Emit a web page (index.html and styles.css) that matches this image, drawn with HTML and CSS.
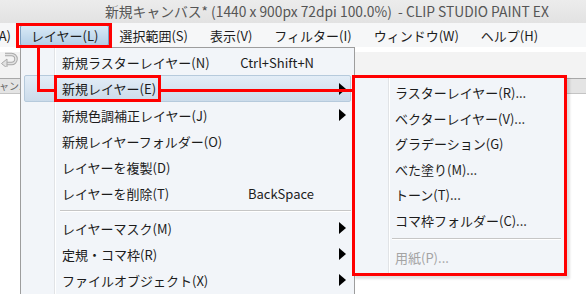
FILE: index.html
```html
<!DOCTYPE html>
<html lang="ja">
<head>
  <meta charset="UTF-8" />
  <title>CLIP STUDIO PAINT EX</title>
  <link rel="stylesheet" href="styles.css">
</head>
<body>

  <div class="window">
    <div class="titlebar">新規キャンバス* (1440 x 900px 72dpi 100.0%)&nbsp; - CLIP STUDIO PAINT EX</div>

    <nav class="menubar">
      <span class="menu-item cut"><span>A)</span></span>
      <span class="menu-item open">レイヤー(L)</span>
      <span class="menu-item">選択範囲(S)</span>
      <span class="menu-item">表示(V)</span>
      <span class="menu-item">フィルター(I)</span>
      <span class="menu-item">ウィンドウ(W)</span>
      <span class="menu-item">ヘルプ(H)</span>
    </nav>

    <div class="workspace">
      <div class="toolbar">
        <svg class="undo" width="18" height="15" viewBox="0 0 18 15">
          <path d="M5 2.5 H11.5 a4.5 4.5 0 0 1 0 9 H6" fill="none" stroke="#a9a9a9" stroke-width="3.6"/>
          <path d="M5 2.5 H11.5 a4.5 4.5 0 0 1 0 9 H6" fill="none" stroke="#e2e2e2" stroke-width="1.6"/>
          <path d="M7 7 L1.5 11.5 L7 16 Z" fill="#e2e2e2" stroke="#a9a9a9" stroke-width="1"/>
        </svg>
      </div>
      <div class="tabs"><span class="tab">キャンバス</span></div>
      <div class="canvas-area"></div>
    </div>

    <!-- Layer menu -->
    <div class="dropdown">
      <div class="item"><span class="label">新規ラスターレイヤー(N)</span><span class="key">Ctrl+Shift+N</span></div>
      <div class="item active"><span class="label">新規レイヤー(E)</span><span class="arrow"></span></div>
      <div class="item"><span class="label">新規色調補正レイヤー(J)</span><span class="arrow"></span></div>
      <div class="item"><span class="label">新規レイヤーフォルダー(O)</span></div>
      <div class="item"><span class="label">レイヤーを複製(D)</span></div>
      <div class="item"><span class="label">レイヤーを削除(T)</span><span class="key">BackSpace</span></div>
      <div class="sep"></div>
      <div class="item"><span class="label">レイヤーマスク(M)</span><span class="arrow"></span></div>
      <div class="item"><span class="label">定規・コマ枠(R)</span><span class="arrow"></span></div>
      <div class="item"><span class="label">ファイルオブジェクト(X)</span><span class="arrow"></span></div>
    </div>

    <!-- New layer submenu -->
    <div class="submenu">
      <div class="sub-item">ラスターレイヤー(R)...</div>
      <div class="sub-item">ベクターレイヤー(V)...</div>
      <div class="sub-item">グラデーション(G)</div>
      <div class="sub-item">べた塗り(M)...</div>
      <div class="sub-item">トーン(T)...</div>
      <div class="sub-item">コマ枠フォルダー(C)...</div>
      <div class="sub-sep"></div>
      <div class="sub-item disabled">用紙(P)...</div>
    </div>

    <!-- red annotation -->
    <div class="mark mark-menu"></div>
    <div class="mark mark-item"></div>
    <div class="line line-down"></div>
    <div class="line line-in"></div>
    <div class="line line-out"></div>
  </div>

</body>
</html>
```

FILE: styles.css
```css
body {
  margin: 0;
  font-family: "Noto Sans CJK JP", sans-serif;
  font-size: 13px;
  color: #1c1c1c;
  background: #fff;
}
.window {
  position: relative;
  width: 586px;
  height: 294px;
  overflow: hidden;
}
.titlebar {
  height: 23px;
  line-height: 23px;
  padding-left: 105px;
  font-size: 13.8px;
  color: #555;
  white-space: nowrap;
  background: linear-gradient(#ececec, #e2e2e2);
}

.menubar {
  display: flex;
  align-items: center;
  height: 24px;
  background: #f6f7f8;
  white-space: nowrap;
}
.menu-item {
  height: 19px;
  line-height: 19px;
  padding: 0 11px;
  border: 1px solid transparent;
  margin-right: -2px;
}
.menu-item.cut {
  display: flex;
  justify-content: flex-end;
  width: 10px;
  padding: 0 10px 0 0;
}
.menu-item.open {
  padding: 0 10px;
  border-color: #7d9dbe;
  border-radius: 2px;
  background: linear-gradient(#d9e9f6, #b3cfe7);
}

.workspace {
  height: 247px;
}
.toolbar {
  height: 26px;
  background: #f3f3f3;
  border-bottom: 1px solid #a8a8a8;
}
.undo {
  display: block;
  margin: 5px 0 0 0;
}
.tabs {
  height: 14px;
  background: #e4e4e4;
  border-bottom: 1px solid #c4c4c4;
  overflow: hidden;
}
.tab {
  display: block;
  margin-left: -11px;
  font-size: 10px;
  line-height: 14px;
  color: #666;
}
.canvas-area {
  height: 100%;
  background: #fff;
}

/* Menus */
.dropdown {
  position: absolute;
  left: 20px;
  top: 47px;
  width: 333px;
  height: 260px;
  padding-top: 1px;
  border: 1px solid #9d9d9d;
  background: linear-gradient(to right, transparent 33px, #e1e3e6 33px, #e1e3e6 34px, #fff 34px, #fff 35px, transparent 35px), #f2f5f9;
}
.item {
  display: flex;
  align-items: center;
  height: 26px;
  padding: 0 8px 0 41px;
  white-space: nowrap;
}
.item .label {
  flex: 1;
}
.item .key {
  margin-right: 32px;
}
.item.active {
  height: 25px;
  margin: 0 3px;
  padding: 0 4px 0 37px;
  border: 1px solid #b6cadc;
  border-radius: 2px;
  background: linear-gradient(#e3edf7, #cbdbea);
}
.arrow {
  width: 0;
  height: 0;
  border-left: 7px solid #000;
  border-top: 6px solid transparent;
  border-bottom: 6px solid transparent;
}
.sep {
  height: 1px;
  margin: 4px 3px 3px 39px;
  background: #c6c6c6;
  border-bottom: 1px solid #fff;
}

.submenu {
  position: absolute;
  left: 352px;
  top: 75px;
  width: 209px;
  height: 193px;
  padding-top: 2px;
  border: 3px solid #ff0000;
  background: linear-gradient(to right, transparent 33px, #e1e3e6 33px, #e1e3e6 34px, #fff 34px, #fff 35px, transparent 35px), #f2f5f9;
  box-shadow: 3px 3px 2px rgba(0,0,0,0.12);
}
.sub-item {
  height: 25.5px;
  line-height: 25.5px;
  padding-left: 40px;
  white-space: nowrap;
}
.sub-item.disabled {
  color: #a4a4a4;
}
.sub-sep {
  height: 1px;
  margin: 5px 3px 5px 37px;
  background: #c6c6c6;
  border-bottom: 1px solid #fff;
}

/* Annotation */
.mark {
  position: absolute;
  border: 3px solid #ff0000;
}
.mark-menu {
  left: 16px;
  top: 23px;
  width: 90px;
  height: 19px;
}
.mark-item {
  left: 54px;
  top: 75px;
  width: 101px;
  height: 21px;
}
.line {
  position: absolute;
  background: #ff0000;
}
.line-down {
  left: 37px;
  top: 48px;
  width: 3px;
  height: 44px;
}
.line-in {
  left: 37px;
  top: 89px;
  width: 17px;
  height: 3px;
}
.line-out {
  left: 160px;
  top: 89px;
  width: 192px;
  height: 3px;
}
```
